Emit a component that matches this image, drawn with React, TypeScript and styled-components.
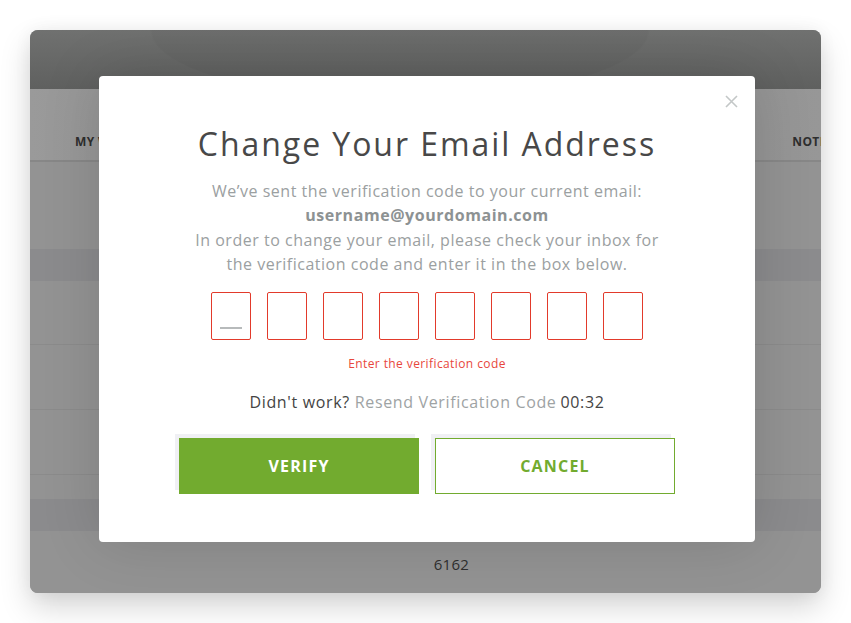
import React from "react";
import styled, { createGlobalStyle } from "styled-components";

const GlobalStyle = createGlobalStyle`
  html, body { margin: 0; padding: 0; background: #ffffff; }
  body { font-family: "Open Sans", "Liberation Sans", sans-serif; }
  * { box-sizing: border-box; }
`;

const Page = styled.div`
  width: 851px;
  height: 623px;
  padding: 30px;
  background: #ffffff;
`;

const Window = styled.div`
  position: relative;
  height: 563px;
  border-radius: 8px;
  overflow: hidden;
  display: flex;
  flex-direction: column;
  background: #939393;
  box-shadow: 0 14px 30px rgba(0, 0, 0, 0.17), 0 0 18px rgba(0, 0, 0, 0.05);
`;

const Header = styled.div`
  height: 59px;
  flex: none;
  background:
    radial-gradient(ellipse 250px 70px at 370px 0, rgba(0, 0, 0, 0.03) 99%, transparent 100%),
    linear-gradient(180deg, #707170 0%, #5f605f 100%);
`;

const Nav = styled.div`
  height: 73px;
  flex: none;
  display: flex;
  align-items: flex-end;
  justify-content: space-between;
  padding: 0 0 10px 45px;
  background: linear-gradient(90deg, #9a9a9a 0%, #8f8f8f 30%, #8f8f8f 70%, #979797 100%);
  border-bottom: 2px solid #878787;
  overflow: hidden;
`;

const NavItem = styled.span<{ $last?: boolean }>`
  font-family: "Open Sans", "Liberation Sans", sans-serif;
  font-weight: 700;
  font-size: 12px;
  color: #2e2e2e;
  letter-spacing: 0.4px;
  white-space: nowrap;
  margin-right: ${(p) => (p.$last ? "-70px" : "0")};
`;

const Band = styled.div<{ $h: number; $dark?: boolean; $line?: boolean }>`
  height: ${(p) => p.$h}px;
  flex: none;
  background: ${(p) => (p.$dark ? "#8b8b8d" : "#939393")};
  border-bottom: ${(p) => (p.$line ? "1px solid #8b8b8b" : "none")};
`;

const Footer = styled.div`
  flex: 1;
  display: flex;
  align-items: center;
  justify-content: center;
  padding: 4px 0 0 52px;
  font-size: 15px;
  letter-spacing: 0.3px;
  color: #2f2f2f;
  background: #939393;
`;

const Modal = styled.div`
  position: absolute;
  left: 69px;
  top: 46px;
  width: 656px;
  height: 466px;
  background: #ffffff;
  border-radius: 4px;
  box-shadow: 0 0 60px rgba(0, 0, 0, 0.14);
  display: flex;
  flex-direction: column;
  align-items: center;
  padding-top: 48px;
`;

const CloseButton = styled.button`
  position: absolute;
  top: 18px;
  right: 17px;
  width: 14px;
  height: 14px;
  padding: 0;
  border: none;
  background: transparent;
  display: flex;
  align-items: center;
  justify-content: center;
`;

const Title = styled.h1`
  margin: 0;
  font-weight: 400;
  font-size: 32px;
  line-height: 40px;
  color: #484848;
  letter-spacing: 1.95px;
`;

const Message = styled.p`
  margin: 15px 0 0;
  text-align: center;
  font-size: 16px;
  line-height: 24.4px;
  color: #9ba0a1;
  letter-spacing: 0.52px;
`;

const Email = styled.strong`
  font-weight: 700;
  color: #8d9293;
  letter-spacing: 0.55px;
`;

const CodeRow = styled.div`
  margin-top: 15px;
  display: flex;
  gap: 16px;
`;

const CodeBox = styled.div`
  width: 40px;
  height: 48px;
  border: 1px solid #e23a2b;
  border-radius: 2px;
  display: flex;
  align-items: flex-end;
  justify-content: center;
  padding-bottom: 10px;
`;

const Caret = styled.span`
  display: block;
  width: 22px;
  height: 2px;
  background: #b7babb;
`;

const ErrorText = styled.div`
  margin-top: 16px;
  font-size: 12px;
  line-height: 16px;
  color: #e8473c;
  letter-spacing: 0.4px;
`;

const Resend = styled.div`
  margin-top: 18px;
  font-size: 16px;
  line-height: 24px;
  color: #444444;
  letter-spacing: 0.65px;
`;

const ResendLink = styled.span`
  color: #9ea3a4;
  margin: 0 4px 0 5px;
`;

const Actions = styled.div`
  margin-top: 24px;
  display: flex;
  gap: 16px;
`;

const Button = styled.button<{ $primary?: boolean }>`
  width: 240px;
  height: 56px;
  font-family: "Open Sans", "Liberation Sans", sans-serif;
  font-weight: 700;
  font-size: 16px;
  letter-spacing: 1.2px;
  cursor: pointer;
  border: 1px solid #72ab2f;
  border-radius: 0;
  background: ${(p) => (p.$primary ? "#72ab2f" : "#ffffff")};
  color: ${(p) => (p.$primary ? "#ffffff" : "#72ab2f")};
  box-shadow: -4px -4px 0 #f0f0f4;
`;

export default function App() {
  return (
    <>
      <GlobalStyle />
      <Page>
        <Window>
          <Header />
          <Nav>
            <NavItem>MY WALLET</NavItem>
            <NavItem $last>NOTIFICATIONS</NavItem>
          </Nav>
          <Band $h={15} />
          <Band $h={72} />
          <Band $h={32} $dark />
          <Band $h={64} $line />
          <Band $h={65} $line />
          <Band $h={65} $line />
          <Band $h={24} />
          <Band $h={32} $dark />
          <Footer>6162</Footer>

          <Modal>
            <CloseButton aria-label="Close">
              <svg width="13" height="13" viewBox="0 0 13 13">
                <path d="M1 1 L12 12 M12 1 L1 12" stroke="#c3c7c7" strokeWidth="1.6" />
              </svg>
            </CloseButton>
            <Title>Change Your Email Address</Title>
            <Message>
              We’ve sent the verification code to your current email:
              <br />
              <Email>username@yourdomain.com</Email>
              <br />
              In order to change your email, please check your inbox for
              <br />
              the verification code and enter it in the box below.
            </Message>
            <CodeRow>
              {Array.from({ length: 8 }).map((_, i) => (
                <CodeBox key={i}>{i === 0 && <Caret />}</CodeBox>
              ))}
            </CodeRow>
            <ErrorText>Enter the verification code</ErrorText>
            <Resend>
              Didn't work?
              <ResendLink>Resend Verification Code</ResendLink>
              00:32
            </Resend>
            <Actions>
              <Button $primary>VERIFY</Button>
              <Button>CANCEL</Button>
            </Actions>
          </Modal>
        </Window>
      </Page>
    </>
  );
}
